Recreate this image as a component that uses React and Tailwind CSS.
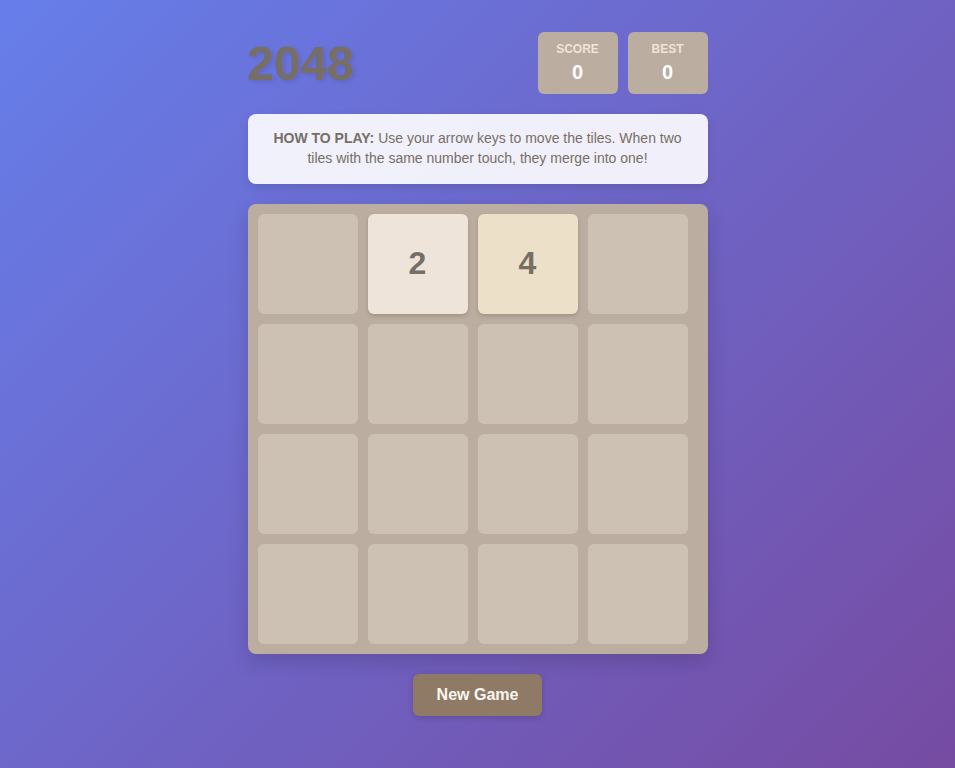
import React from "react";

const tiles = [
  [0, 2, 4, 0],
  [0, 0, 0, 0],
  [0, 0, 0, 0],
  [0, 0, 0, 0],
];

function Tile({ v }) {
  if (!v) return <div className="w-[100px] h-[100px] rounded-[6px] bg-[#cdc1b4]" />;
  const bg = v === 2 ? "bg-[#eee4da]" : "bg-[#ede0c8]";
  return (
    <div
      className={`w-[100px] h-[100px] rounded-[6px] ${bg} flex items-center justify-center pb-[2px] text-[32px] leading-[36px] font-bold text-[#776e65] shadow-[0_2px_4px_rgba(0,0,0,0.15)]`}
    >
      {v}
    </div>
  );
}

export default function App() {
  return (
    <div
      className="min-h-screen w-full bg-[linear-gradient(135deg,#667eea_0%,#764ba2_100%)] flex justify-center pt-[32px]"
      style={{ fontFamily: '"Liberation Sans", Arial, sans-serif' }}
    >
      <div className="w-[460px] flex flex-col items-center">
        <div className="w-full flex justify-between items-center h-[62px]">
          <h1 className="text-[48px] font-bold text-[#776e65] leading-[55px] [text-shadow:2px_2px_4px_rgba(0,0,0,0.1)]">
            2048
          </h1>
          <div className="flex gap-[10px]">
            {["SCORE", "BEST"].map((l) => (
              <div
                key={l}
                className="w-[80px] h-[62px] rounded-[6px] bg-[#bbada0] flex flex-col items-center pt-[10px]"
              >
                <div className="text-[12px] leading-[14px] font-bold text-[#eee4da]">{l}</div>
                <div className="text-[20px] leading-[24px] mt-[4px] font-bold text-white">0</div>
              </div>
            ))}
          </div>
        </div>

        <div className="w-full mt-[20px] h-[70px] rounded-[8px] bg-[rgba(255,255,255,0.9)] shadow-[0_4px_10px_rgba(0,0,0,0.1)] px-[20px] pt-[14px] text-center text-[14px] leading-[20px] text-[#776e65]">
          <p>
            <strong>HOW TO PLAY:</strong> Use your arrow keys to move the tiles. When two tiles with the same
            number touch, they merge into one!
          </p>
        </div>

        <div className="w-full mt-[20px] h-[450px] rounded-[8px] bg-[#bbada0] p-[10px] shadow-[0_8px_20px_rgba(0,0,0,0.15)]">
          <div className="grid grid-cols-[repeat(4,100px)] gap-[10px]">
            {tiles.flat().map((v, i) => (
              <Tile key={i} v={v} />
            ))}
          </div>
        </div>

        <button className="mt-[20px] h-[42px] px-[24px] rounded-[6px] bg-[#8f7a66] text-[#f9f6f2] text-[16px] font-bold shadow-[0_2px_6px_rgba(0,0,0,0.15)]">
          New Game
        </button>
      </div>
    </div>
  );
}
